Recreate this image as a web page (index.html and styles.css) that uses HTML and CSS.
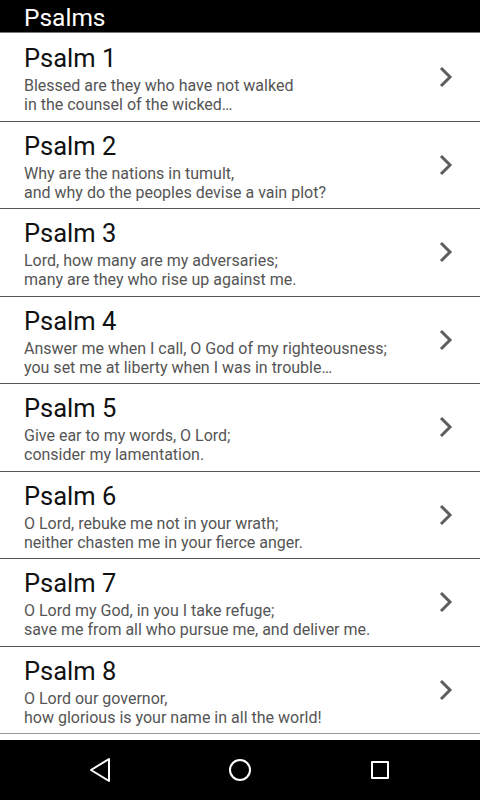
FILE: index.html
```html
<!DOCTYPE html>
<html>
<head>
  <meta name="viewport" content="width=device-width, initial-scale=1">
  <title>Psalms</title>
  <link rel="stylesheet" href="styles.css">
</head>
<body>
  <div id="screen">
    <div id="title">Psalms</div>
    <div id="list">
      <div class="row">
        <div class="text">
          <div class="name">Psalm 1</div>
          <div class="verse">Blessed are they who have not walked<br>in the counsel of the wicked…</div>
        </div>
        <svg class="chevron" width="16" height="24" viewBox="0 0 16 24"><polyline points="3,3 12,12 3,21"/></svg>
      </div>
      <div class="row">
        <div class="text">
          <div class="name">Psalm 2</div>
          <div class="verse">Why are the nations in tumult,<br>and why do the peoples devise a vain plot?</div>
        </div>
        <svg class="chevron" width="16" height="24" viewBox="0 0 16 24"><polyline points="3,3 12,12 3,21"/></svg>
      </div>
      <div class="row">
        <div class="text">
          <div class="name">Psalm 3</div>
          <div class="verse">Lord, how many are my adversaries;<br>many are they who rise up against me.</div>
        </div>
        <svg class="chevron" width="16" height="24" viewBox="0 0 16 24"><polyline points="3,3 12,12 3,21"/></svg>
      </div>
      <div class="row">
        <div class="text">
          <div class="name">Psalm 4</div>
          <div class="verse">Answer me when I call, O God of my righteousness;<br>you set me at liberty when I was in trouble…</div>
        </div>
        <svg class="chevron" width="16" height="24" viewBox="0 0 16 24"><polyline points="3,3 12,12 3,21"/></svg>
      </div>
      <div class="row">
        <div class="text">
          <div class="name">Psalm 5</div>
          <div class="verse">Give ear to my words, O Lord;<br>consider my lamentation.</div>
        </div>
        <svg class="chevron" width="16" height="24" viewBox="0 0 16 24"><polyline points="3,3 12,12 3,21"/></svg>
      </div>
      <div class="row">
        <div class="text">
          <div class="name">Psalm 6</div>
          <div class="verse">O Lord, rebuke me not in your wrath;<br>neither chasten me in your fierce anger.</div>
        </div>
        <svg class="chevron" width="16" height="24" viewBox="0 0 16 24"><polyline points="3,3 12,12 3,21"/></svg>
      </div>
      <div class="row">
        <div class="text">
          <div class="name">Psalm 7</div>
          <div class="verse">O Lord my God, in you I take refuge;<br>save me from all who pursue me, and deliver me.</div>
        </div>
        <svg class="chevron" width="16" height="24" viewBox="0 0 16 24"><polyline points="3,3 12,12 3,21"/></svg>
      </div>
      <div class="row last">
        <div class="text">
          <div class="name">Psalm 8</div>
          <div class="verse">O Lord our governor,<br>how glorious is your name in all the world!</div>
        </div>
        <svg class="chevron" width="16" height="24" viewBox="0 0 16 24"><polyline points="3,3 12,12 3,21"/></svg>
      </div>
    </div>
    <div id="navbar">
      <div class="navkey"><svg width="24" height="28" viewBox="0 0 24 28"><polygon points="21,3 21,25 3,14"/></svg></div>
      <div class="navkey"><svg width="26" height="26" viewBox="0 0 26 26"><circle cx="13" cy="13" r="10"/></svg></div>
      <div class="navkey"><svg width="22" height="22" viewBox="0 0 22 22"><rect x="3" y="3" width="16" height="16"/></svg></div>
    </div>
  </div>
</body>
</html>
```

FILE: styles.css
```css
html, body {
  margin: 0;
  background-color: #fff;
  font-family: Roboto, "Noto Sans", sans-serif;
}

#screen {
  width: 480px;
  height: 800px;
  display: flex;
  flex-direction: column;
  overflow: hidden;
}

#title {
  height: 33px;
  box-sizing: border-box;
  background-color: #000;
  border-bottom: 1px solid #777;
  color: #fff;
  font-size: 24.5px;
  line-height: 35px;
  padding-left: 24px;
  flex: none;
}

#list {
  flex: 1;
  overflow: hidden;
  margin-top: 1px;
}

.row {
  height: 87.5px;
  box-sizing: border-box;
  border-bottom: 1px solid #555;
  display: flex;
  align-items: center;
  padding: 0 20px 0 24px;
}

.row.last {
  border-bottom-color: #999;
}

.text {
  flex: 1;
  align-self: flex-start;
  padding-top: 10px;
}

.name {
  font-size: 25.5px;
  line-height: 28px;
  color: #111;
}

.verse {
  font-size: 16px;
  line-height: 19px;
  color: #555;
  margin-top: 4px;
}

.chevron {
  flex: none;
  margin-right: 6px;
}

.chevron polyline {
  fill: none;
  stroke: #5e5e5e;
  stroke-width: 3;
}

#navbar {
  height: 60px;
  flex: none;
  background-color: #000;
  display: flex;
  align-items: center;
  justify-content: center;
}

.navkey {
  width: 140px;
  display: flex;
  justify-content: center;
}

#navbar svg * {
  fill: none;
  stroke: #fff;
  stroke-width: 2;
  stroke-linejoin: round;
}
```
